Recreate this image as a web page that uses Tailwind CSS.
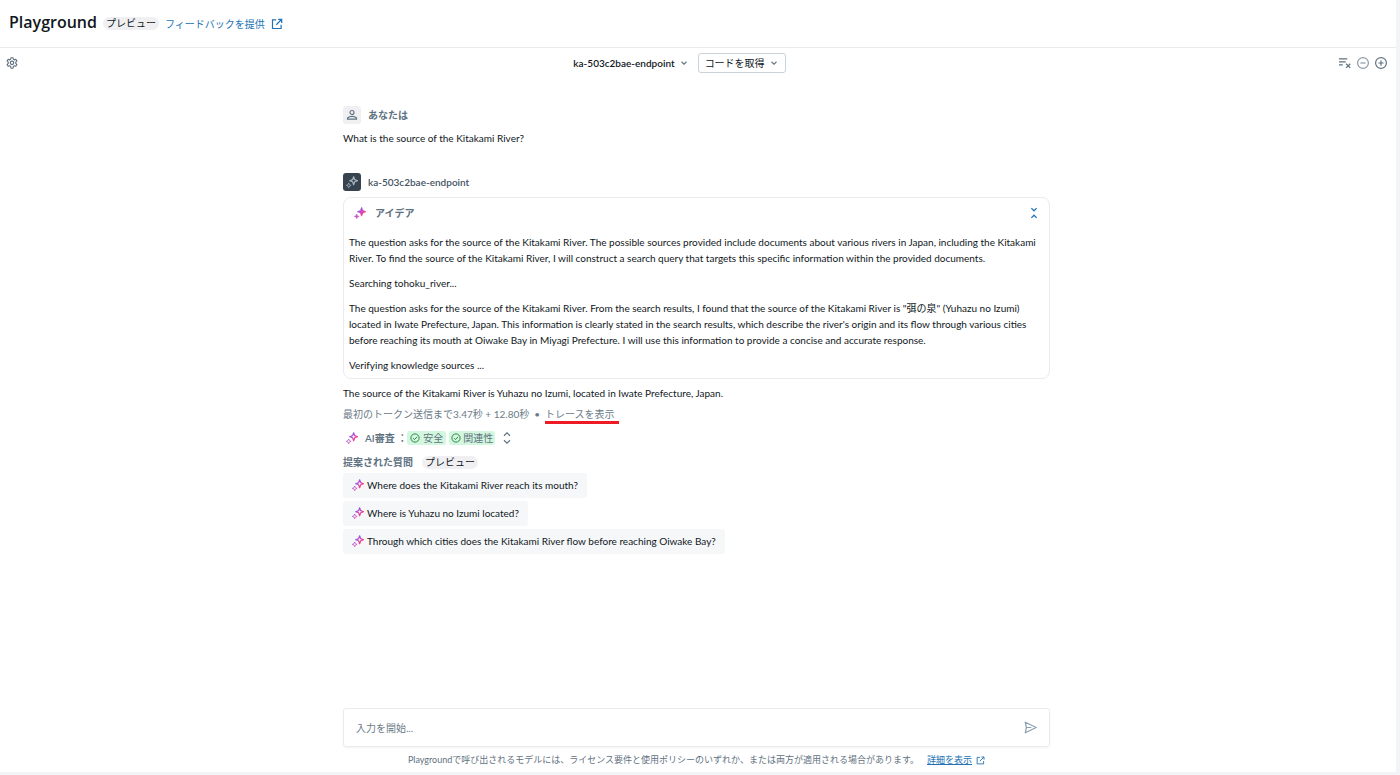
<!DOCTYPE html>
<html lang="ja">
<head>
    <meta charset="UTF-8">
    <meta name="viewport" content="width=device-width, initial-scale=1.0">
    <title>Playground</title>
    <script src="https://cdn.jsdelivr.net/npm/@tailwindcss/browser@4"></script>
</head>
<body class="bg-[#f3f4f8] font-['Lato','Noto_Sans_CJK_JP',sans-serif] text-[10px] leading-4 text-[#11171c]">

    <!-- Shared icons and the sparkle gradient -->
    <svg class="absolute h-0 w-0" aria-hidden="true">
        <defs>
            <linearGradient id="spark" x1="3" y1="2" x2="14" y2="12" gradientUnits="userSpaceOnUse">
                <stop offset="0.25" stop-color="#7a5ae8"/>
                <stop offset="0.5" stop-color="#cf48cf"/>
                <stop offset="0.8" stop-color="#f0407c"/>
            </linearGradient>
            <symbol id="sparkle" viewBox="0 0 16 16">
                <path d="M10.2 1 11.6 4.9 15.5 6.3 11.6 7.7 10.2 11.6 8.8 7.7 4.9 6.3 8.8 4.9Z" stroke-width="1.6" stroke-linejoin="round"/>
                <path d="M3.6 9.3 4.5 11.6 6.8 12.5 4.5 13.4 3.6 15.7 2.7 13.4.4 12.5 2.7 11.6Z" stroke-width="1" stroke-linejoin="round"/>
            </symbol>
            <symbol id="sparkle-fill" viewBox="0 0 16 16">
                <path d="M10.2.3 12 4.6 16 6.3 12 8 10.2 12.3 8.4 8 4.4 6.3 8.4 4.6Z" stroke-width="0.8" stroke-linejoin="round"/>
                <path d="M3.6 9.3 4.5 11.6 6.8 12.5 4.5 13.4 3.6 15.7 2.7 13.4.4 12.5 2.7 11.6Z" stroke-width="0.6" stroke-linejoin="round"/>
            </symbol>
            <symbol id="external" viewBox="0 0 16 16">
                <path d="M7 2.5H2v11.5h11.5V9M9.5 1.75h4.75V6.5M14 2 7 9" fill="none" stroke="currentColor" stroke-width="1.6"/>
            </symbol>
            <symbol id="chevron" viewBox="0 0 16 16">
                <path d="m4 6 4 4 4-4" fill="none" stroke="currentColor" stroke-width="1.7"/>
            </symbol>
            <symbol id="check" viewBox="0 0 16 16">
                <circle cx="8" cy="8" r="6.6" fill="none" stroke="currentColor" stroke-width="1.5"/>
                <path d="m4.8 8.2 2.3 2.3 4.2-4.4" fill="none" stroke="currentColor" stroke-width="1.5"/>
            </symbol>
        </defs>
    </svg>

    <div class="flex min-h-screen flex-col pr-1 pb-[3px]">
        <div class="flex flex-1 flex-col bg-white">

            <!-- Page header -->
            <header class="flex h-12 items-center border-b border-[#ebebee] pl-[9px]">
                <h1 class="pb-[3px] font-['Open_Sans',sans-serif] text-base leading-5 font-semibold">Playground</h1>
                <span class="ml-[6px] rounded-full bg-[#f0f0f3] px-[3px] leading-[13px]">プレビュー</span>
                <a href="#" class="ml-[6px] flex items-center gap-[6px] text-[#2272b4]">フィードバックを提供
                    <svg class="size-3"><use href="#external"/></svg>
                </a>
            </header>

            <!-- Toolbar -->
            <div class="grid grid-cols-[1fr_auto_1fr] items-center pt-[5px] pr-[9px] pl-[6px]">
                <button aria-label="設定" class="w-3 text-[#5f7281]">
                    <svg class="block size-3" viewBox="0 0 16 16" fill="none" stroke="currentColor" stroke-width="1.5">
                        <path d="M6.6 1h2.800l.4 2 1.400.8 1.900-.7 1.400 2.400L13 6.900v1.700l1.500 1.400-1.400 2.400-1.900-.7-1.400.8-.4 2.500H6.600l-.4-2.500-1.400-.8-1.900.7L1.500 10 3 8.600V6.900L1.500 5.500l1.400-2.400 1.900.7L6.200 3Z" stroke-linejoin="round"/>
                        <circle cx="8" cy="7.8" r="2.3"/>
                    </svg>
                </button>
                <div class="flex items-center gap-[9px] pr-[34px]">
                    <button class="flex items-center gap-1 font-semibold">ka-503c2bae-endpoint
                        <svg class="size-[10px] text-[#5f7281]"><use href="#chevron"/></svg>
                    </button>
                    <button class="flex h-5 items-center gap-1 rounded-[3px] border border-[#c9d3dc] px-[6px]">コードを取得
                        <svg class="size-[10px] text-[#5f7281]"><use href="#chevron"/></svg>
                    </button>
                </div>
                <div class="flex items-center justify-end gap-[6px] text-[#5f7281]">
                    <button aria-label="クリア">
                        <svg class="block size-3" viewBox="0 0 16 16" fill="none" stroke="currentColor" stroke-width="1.6">
                            <path d="M0 2.5h11M0 6.5h9M0 10.5h5M9.5 9l5.5 5.5M15 9l-5.5 5.5"/>
                        </svg>
                    </button>
                    <button aria-label="削除" class="text-[#8c9aa6]">
                        <svg class="block size-3" viewBox="0 0 16 16" fill="none" stroke="currentColor" stroke-width="1.6">
                            <circle cx="8" cy="8" r="7.2"/><path d="M4.5 8h7"/>
                        </svg>
                    </button>
                    <button aria-label="追加">
                        <svg class="block size-3" viewBox="0 0 16 16" fill="none" stroke="currentColor" stroke-width="1.6">
                            <circle cx="8" cy="8" r="7.2"/><path d="M4.5 8h7M8 4.5v7"/>
                        </svg>
                    </button>
                </div>
            </div>

            <!-- Conversation -->
            <main class="mx-auto flex w-full max-w-[710px] flex-1 flex-col pt-[33px] pr-[3px]">
                <div class="flex items-center gap-[7px] font-semibold text-[#5f7281]">
                    <span class="flex size-[18px] items-center justify-center rounded-[3px] bg-[#f0f0f3]">
                        <svg class="size-3" viewBox="0 0 16 16" fill="none" stroke="currentColor" stroke-width="1.5">
                            <circle cx="8" cy="4.7" r="2.7"/><path d="M2 13.5v-1.5c1.500-1.500 3.500-2.200 6-2.200s4.500.7 6 2.200v1.500Z"/>
                        </svg>
                    </span>
                    あなたは
                </div>
                <p class="mt-[6px]">What is the source of the Kitakami River?</p>

                <div class="mt-[27px] flex items-center gap-[7px] font-semibold text-[#44535f]">
                    <span class="flex size-[18px] items-center justify-center rounded-[3px] bg-[#37444f]">
                        <svg class="size-3 fill-none stroke-[#a9b6c1]"><use href="#sparkle"/></svg>
                    </span>
                    ka-503c2bae-endpoint
                </div>

                <!-- Thinking card -->
                <section class="mt-[6px] rounded-lg border border-[#ebebee] px-[5px] pt-[7px] pb-[5px]">
                    <div class="flex items-center pl-[5px]">
                        <svg class="size-3" fill="url(#spark)" stroke="url(#spark)"><use href="#sparkle-fill"/></svg>
                        <h2 class="ml-[9px] font-semibold text-[#5f7281]">アイデア</h2>
                        <button aria-label="折りたたむ" class="mr-1 ml-auto text-[#2272b4]">
                            <svg class="block size-3" viewBox="0 0 16 16" fill="none" stroke="currentColor" stroke-width="1.7">
                                <path d="m4.5 1.5 3.5 3.5 3.5-3.5M4.5 14.5 8 11l3.5 3.5"/>
                            </svg>
                        </button>
                    </div>
                    <div class="mt-[13px] space-y-[9px]">
                        <p>The question asks for the source of the Kitakami River. The possible sources provided include documents about various rivers in Japan, including the Kitakami River. To find the source of the Kitakami River, I will construct a search query that targets this specific information within the provided documents.</p>
                        <p>Searching tohoku_river...</p>
                        <p>The question asks for the source of the Kitakami River. From the search results, I found that the source of the Kitakami River is "弭の泉" (Yuhazu no Izumi) located in Iwate Prefecture, Japan. This information is clearly stated in the search results, which describe the river's origin and its flow through various cities before reaching its mouth at Oiwake Bay in Miyagi Prefecture. I will use this information to provide a concise and accurate response.</p>
                        <p>Verifying knowledge sources ...</p>
                    </div>
                </section>

                <p class="mt-[6px]">The source of the Kitakami River is Yuhazu no Izumi, located in Iwate Prefecture, Japan.</p>
                <div class="mt-[5px] flex items-center text-[#6b7b88]">
                    <span>最初のトークン送信まで3.47秒 + 12.80秒</span>
                    <span class="mx-[5px]">•</span>
                    <a href="#" class="relative">トレースを表示
                        <span class="absolute top-[15px] -right-1 left-0 h-[3px] bg-[#ed1c24]"></span>
                    </a>
                </div>

                <div class="mt-2 flex items-center text-[#5f7281]">
                    <svg class="ml-[3px] size-3 fill-none" stroke="url(#spark)"><use href="#sparkle"/></svg>
                    <span class="ml-[7px] font-semibold">AI審査&nbsp;：</span>
                    <span class="flex items-center gap-[3px] rounded-[3px] bg-[#d3f7de] px-[3px] leading-[14px]">
                        <svg class="size-[10px] text-[#277c43]"><use href="#check"/></svg>安全
                    </span>
                    <span class="ml-[3px] flex items-center gap-[2px] rounded-[3px] bg-[#d3f7de] px-[2px] leading-[14px]">
                        <svg class="size-[10px] text-[#277c43]"><use href="#check"/></svg>関連性
                    </span>
                    <button aria-label="展開" class="ml-[6px]">
                        <svg class="block size-3" viewBox="0 0 16 16" fill="none" stroke="currentColor" stroke-width="1.5">
                            <path d="M4 5 8 1l4 4M4 11l4 4 4-4"/>
                        </svg>
                    </button>
                </div>

                <!-- Suggested questions -->
                <div class="mt-2 flex items-center gap-[9px]">
                    <h2 class="font-semibold text-[#5f7281]">提案された質問</h2>
                    <span class="rounded-full bg-[#f0f0f3] px-[3px] leading-[13px]">プレビュー</span>
                </div>
                <div class="mt-[3px] flex flex-col items-start gap-[3px]">
                    <button class="flex h-[25px] items-center gap-[3px] rounded-[3px] bg-[#f6f7f9] pr-[9px] pb-px pl-[9px]">
                        <svg class="size-3 fill-none" stroke="url(#spark)"><use href="#sparkle"/></svg>Where does the Kitakami River reach its mouth?
                    </button>
                    <button class="flex h-[25px] items-center gap-[3px] rounded-[3px] bg-[#f6f7f9] pr-[9px] pb-px pl-[9px]">
                        <svg class="size-3 fill-none" stroke="url(#spark)"><use href="#sparkle"/></svg>Where is Yuhazu no Izumi located?
                    </button>
                    <button class="flex h-[25px] items-center gap-[3px] rounded-[3px] bg-[#f6f7f9] pr-[9px] pb-px pl-[9px]">
                        <svg class="size-3 fill-none" stroke="url(#spark)"><use href="#sparkle"/></svg>Through which cities does the Kitakami River flow before reaching Oiwake Bay?
                    </button>
                </div>

                <!-- Prompt box -->
                <form class="mt-auto flex h-[39px] items-center rounded-[3px] border border-[#ebebee] px-3 shadow-xs">
                    <input type="text" aria-label="入力を開始" placeholder="入力を開始..." class="min-w-0 flex-1 outline-none placeholder:text-[#6b7b88]">
                    <button type="submit" aria-label="送信" class="text-[#8c9fb0]">
                        <svg class="block size-[13px]" viewBox="0 0 16 16" fill="none" stroke="currentColor" stroke-width="1.5">
                            <path d="M1.5 1.5 15 8 1.5 14.5 3 8ZM3 8h6" stroke-linejoin="round"/>
                        </svg>
                    </button>
                </form>
                <p class="mt-[5px] mb-1 flex items-center justify-center text-[9px] text-[#5f7281]">Playgroundで呼び出されるモデルには、ライセンス要件と使用ポリシーのいずれか、または両方が適用される場合があります。
                    <a href="#" class="ml-2 flex items-center gap-1 text-[#2272b4]"><span class="underline">詳細を表示</span>
                        <svg class="size-[9px]"><use href="#external"/></svg>
                    </a>
                </p>
            </main>
        </div>
    </div>
</body>
</html>
